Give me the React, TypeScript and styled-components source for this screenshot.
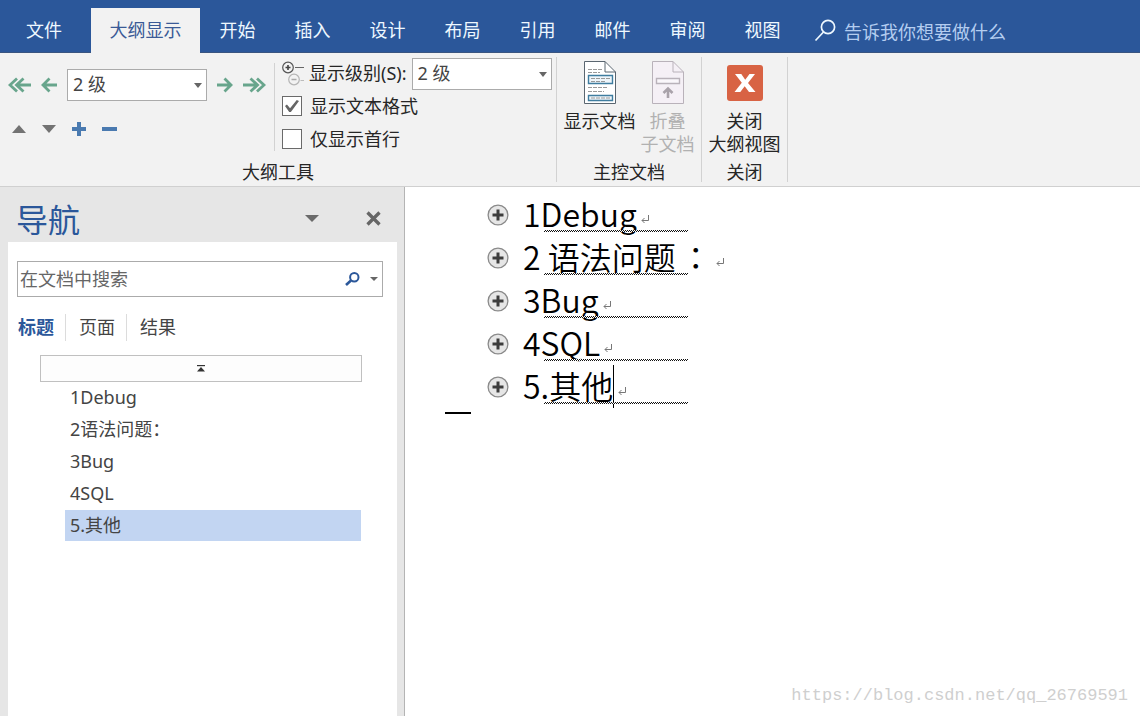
import React from "react";
import styled, { createGlobalStyle, css } from "styled-components";

const uiFont = `"Noto Sans", "Noto Sans CJK SC", sans-serif`;
const docFont = `"Noto Sans CJK SC", sans-serif`;

const Global = createGlobalStyle`
  *, *::before, *::after { box-sizing: border-box; }
  body { margin: 0; background: #fff; font: 18px/24px ${uiFont}; color: #262626; }
  button, input, select { font: inherit; color: inherit; margin: 0; }
  button { border: 0; padding: 0; background: none; cursor: pointer; }
  svg { display: block; flex: none; }
`;

const Window = styled.div`
  display: flex;
  flex-direction: column;
  min-height: 100vh;
`;

/* Tab strip */
const TabStrip = styled.nav`
  display: flex;
  height: 53px;
  padding-top: 8px;
  background: #2b579a;
  box-shadow: inset 0 -1px #3a5580;
`;
const Tab = styled.button<{ $kind?: "file" | "active" }>`
  flex: none;
  width: 75px;
  padding-bottom: 2px;
  color: #eef8ff;
  white-space: nowrap;
  ${(p) => p.$kind === "file" && css`width: 88px; margin-right: 3px;`}
  ${(p) => p.$kind === "active" && css`width: 109px; background: #f2f2f2; color: #3a5a96;`}
`;
const TellMe = styled.label`
  display: flex;
  align-items: center;
  gap: 8px;
  flex: 1;
  min-width: 0;
  padding-left: 14px;
`;
const TellMeInput = styled.input`
  flex: 1;
  min-width: 0;
  padding: 2px 0 0;
  border: 0;
  outline: 0;
  background: none;
  &::placeholder { color: #b4cdf0; opacity: 1; }
`;

/* Ribbon */
const Ribbon = styled.div`
  display: flex;
  height: 134px;
  padding: 4px 0;
  background: #f2f2f2;
  border-bottom: 1px solid #d0d0d0;
`;
const Group = styled.section<{ $width: number }>`
  display: flex;
  flex-direction: column;
  flex: none;
  width: ${(p) => p.$width}px;
  border-right: 1px solid #d2d2d2;
`;
const GroupBody = styled.div<{ $center?: boolean }>`
  display: flex;
  flex: 1;
  gap: 5px;
  justify-content: ${(p) => (p.$center ? "center" : "flex-start")};
`;
const GroupLabel = styled.h2`
  margin: 0;
  font: inherit;
  line-height: 20px;
  text-align: center;
`;
const LevelPane = styled.div`
  display: flex;
  flex-direction: column;
  gap: 16px;
  width: 275px;
  height: 88px;
  margin-top: 6px;
  padding: 6px 0 0 8px;
  border-right: 1px solid #d2d2d2;
`;
const LevelRow = styled.div`
  display: flex;
  align-items: center;
  gap: 10px;
`;
const MoveRow = styled.div`
  display: flex;
  margin-left: -4px;
`;
const MoveButton = styled.button`
  display: grid;
  place-items: center;
  width: 30px;
  height: 24px;
`;
const SelectBox = styled.div`
  display: grid;
  align-items: center;
  width: 140px;
  height: 32px;
  border: 1px solid #ababab;
  background: #fff;
  > * { grid-area: 1 / 1; }
  > svg { justify-self: end; margin-right: 4px; pointer-events: none; }
`;
const Select = styled.select`
  appearance: none;
  width: 100%;
  height: 30px;
  padding: 0 5px 2px;
  border: 0;
  outline: 0;
  background: transparent;
  color: #444;
`;
const ShowPane = styled.div`
  display: flex;
  flex-direction: column;
  gap: 1px;
  padding: 1px 0 0 2px;
`;
const ShowRow = styled.div`
  display: flex;
  align-items: center;
  gap: 5px;
  height: 32px;
  white-space: nowrap;
  > label { padding-bottom: 2px; }
`;
const CheckRow = styled.label`
  display: flex;
  align-items: center;
  gap: 8px;
  height: 32px;
  padding-bottom: 2px;
`;
const Check = styled.input`
  appearance: none;
  display: grid;
  place-items: center;
  width: 20px;
  height: 20px;
  border: 1px solid #6a6a6a;
  background: #fff;
  &:checked::before {
    content: "";
    width: 14px;
    height: 12px;
    background: #666;
    clip-path: polygon(0 50%, 14% 38%, 36% 68%, 84% 0, 100% 8%, 42% 100%, 30% 100%);
  }
`;
const BigButton = styled.button`
  display: flex;
  flex-direction: column;
  align-items: center;
  padding-top: 4px;
  line-height: 23px;
  white-space: nowrap;
  > svg { margin-bottom: 6px; }
  &:disabled { color: #b1b1b1; cursor: default; }
`;

/* Body */
const Workspace = styled.div`
  display: flex;
  flex: 1;
`;
const NavPane = styled.aside`
  display: flex;
  flex-direction: column;
  flex: none;
  width: 405px;
  padding: 0 7px 0 8px;
  background: #e6e6e6;
  border-right: 1px solid #b4b4b4;
`;
const NavHeader = styled.header`
  display: flex;
  align-items: center;
  gap: 47px;
  height: 55px;
  padding: 7px 16px 0 8px;
`;
const NavTitle = styled.h1`
  flex: 1;
  margin: 0;
  font: 32px/40px ${docFont};
  color: #2b579a;
`;
const NavBody = styled.div`
  flex: 1;
  padding: 19px 14px 0 9px;
  background: #fff;
`;
const SearchBox = styled.div`
  display: flex;
  align-items: center;
  gap: 10px;
  height: 36px;
  padding: 0 4px 0 2px;
  border: 1px solid #ababab;
`;
const SearchInput = styled.input`
  flex: 1;
  min-width: 0;
  padding: 0;
  border: 0;
  outline: 0;
  background: none;
  &::placeholder { color: #666; opacity: 1; }
`;
const NavTabs = styled.div`
  display: flex;
  margin: 17px 0 14px;
`;
const NavTab = styled.button<{ $active?: boolean }>`
  height: 27px;
  padding: 0 11px 2px 13px;
  border-right: 1px solid #dcdcdc;
  color: ${(p) => (p.$active ? "#2b579a" : "#444")};
  font-weight: ${(p) => (p.$active ? 700 : 400)};
  &:first-child { padding-left: 1px; }
  &:last-child { border-right: 0; }
`;
const JumpTop = styled.button`
  display: grid;
  place-items: center;
  width: 322px;
  height: 27px;
  margin-left: 23px;
  border: 1px solid #c0c0c0;
  background: #fdfdfd;
`;
const Headings = styled.ul`
  list-style: none;
  margin: 0 22px 0 48px;
  padding: 0;
`;
const Heading = styled.li<{ $active?: boolean }>`
  height: 32px;
  padding: 0 5px;
  border-bottom: 1px solid #fff;
  line-height: 31px;
  color: #444;
  background: ${(p) => (p.$active ? "#c2d5f2" : "transparent")};
`;

const Page = styled.main`
  display: flex;
  flex-direction: column;
  flex: 1;
  min-width: 0;
  padding: 6px 12px 8px 40px;
  background: #fff;
`;
const Outline = styled.ol`
  list-style: none;
  margin: 0;
  padding: 0 0 0 42px;
`;
const OutlineLine = styled.li`
  position: relative;
  display: flex;
  align-items: center;
  height: 43px;
  font: 350 32px/40px ${docFont};
  color: #000;
  white-space: pre;
  &::after {
    content: "";
    position: absolute;
    left: 57px;
    top: 37px;
    width: 144px;
    height: 2px;
    background: repeating-conic-gradient(#111 0 25%, #fff 0 50%) 0 0 / 2px 2px;
  }
`;
const LineText = styled.span`
  padding-bottom: 4px;
`;
const Expander = styled.button`
  margin-right: 14px;
`;
const WideColon = styled.span`
  padding-left: 4px;
  font-family: "Noto Sans CJK TC", sans-serif;
`;
const Caret = styled.span`
  width: 1px;
  height: 43px;
  background: #000;
`;
const Mark = styled.svg`
  margin: 10px 0 0 4px;
`;
const EndMark = styled.hr`
  width: 26px;
  height: 2px;
  margin: 4px 0 0;
  border: 0;
  background: #000;
`;
const Watermark = styled.footer`
  margin-top: auto;
  align-self: flex-end;
  font: 17px/24px "Liberation Mono", monospace;
  color: #cfcfcf;
`;

const DownArrow = ({ w = 8, h = 5, color = "#666" }: { w?: number; h?: number; color?: string }) => (
  <svg width={w} height={h} viewBox="0 0 8 5" preserveAspectRatio="none"><path d="M0 0H8L4 5Z" fill={color} /></svg>
);

const ArrowIcon = ({ double, right }: { double?: boolean; right?: boolean }) => {
  const w = double ? 23 : 16;
  return (
    <svg width={w} height="16" viewBox={`0 0 ${w} 16`} fill="none" stroke="#68a58c" strokeWidth="2.8">
      <g transform={right ? `matrix(-1 0 0 1 ${w} 0)` : undefined}>
        {double ? <path d="M9 1.5L2 8L9 14.5M15.5 1.5L8.500 8L15.500 14.500M9 8H23" /> : <path d="M8.500 1.500L2 8L8.500 14.500M2 8H16" />}
      </g>
    </svg>
  );
};

const ReturnMark = () => (
  <Mark width="9" height="9" viewBox="0 0 9 9" fill="none" stroke="#777" aria-hidden="true">
    <path d="M7.500 0V5.500H1M3.500 3L1 5.500L3.500 8" />
  </Mark>
);

const OutlinePlus = () => (
  <Expander aria-label="展开">
    <svg width="22" height="22" viewBox="0 0 22 22">
      <circle cx="11" cy="11" r="9.900" fill="#e6e6e6" stroke="#8a8a8a" strokeWidth="1.300" />
      <path d="M11 5.500V16.500M5.500 11H16.500" stroke="#3c3c3c" strokeWidth="3" />
    </svg>
  </Expander>
);

const tabs = ["开始", "插入", "设计", "布局", "引用", "邮件", "审阅", "视图"];
const headings = ["1Debug", "2语法问题：", "3Bug", "4SQL", "5.其他"];

export default function App() {
  return (
    <>
      <Global />
      <Window>
        <TabStrip>
          <Tab $kind="file">文件</Tab>
          <Tab $kind="active">大纲显示</Tab>
          {tabs.map((t) => <Tab key={t}>{t}</Tab>)}
          <TellMe>
            <svg width="22" height="24" viewBox="0 0 22 24" fill="none" stroke="#eef8ff" strokeWidth="1.700">
              <circle cx="14" cy="8" r="6.600" />
              <path d="M9.500 13L1.500 21.500" />
            </svg>
            <TellMeInput aria-label="告诉我你想要做什么" placeholder="告诉我你想要做什么" />
          </TellMe>
        </TabStrip>

        <Ribbon>
          <Group $width={557}>
            <GroupBody>
              <LevelPane>
                <LevelRow>
                  <button aria-label="提升至标题 1"><ArrowIcon double /></button>
                  <button aria-label="升级"><ArrowIcon /></button>
                  <SelectBox>
                    <Select aria-label="大纲级别" defaultValue="2"><option value="2">2 级</option></Select>
                    <DownArrow />
                  </SelectBox>
                  <button aria-label="降级"><ArrowIcon right /></button>
                  <button aria-label="降级为正文"><ArrowIcon double right /></button>
                </LevelRow>
                <MoveRow>
                  <MoveButton aria-label="上移"><svg width="14" height="8" viewBox="0 0 14 8"><path d="M0 8H14L7 0Z" fill="#737373" /></svg></MoveButton>
                  <MoveButton aria-label="下移"><svg width="14" height="8" viewBox="0 0 14 8"><path d="M0 0H14L7 8Z" fill="#737373" /></svg></MoveButton>
                  <MoveButton aria-label="展开"><svg width="14" height="14" viewBox="0 0 14 14"><path d="M7 0V14M0 7H14" stroke="#4a7ab0" strokeWidth="4" /></svg></MoveButton>
                  <MoveButton aria-label="折叠"><svg width="15" height="4" viewBox="0 0 15 4"><path d="M0 2H15" stroke="#4a7ab0" strokeWidth="4" /></svg></MoveButton>
                </MoveRow>
              </LevelPane>
              <ShowPane>
                <ShowRow>
                  <svg width="22" height="26" viewBox="0 0 22 26" fill="none">
                    <circle cx="6" cy="6.500" r="5.300" stroke="#555" strokeWidth="1.200" />
                    <path d="M6 4V9M3.500 6.500H8.500" stroke="#444" strokeWidth="1.600" />
                    <path d="M13 6.500H22" stroke="#666" />
                    <circle cx="12" cy="18.500" r="5.300" stroke="#b5b5b5" strokeWidth="1.200" />
                    <path d="M9.500 18.500H14.500" stroke="#aaa" strokeWidth="1.500" />
                    <path d="M18.500 19.500H22" stroke="#bbb" />
                  </svg>
                  <label htmlFor="show-level">显示级别(S):</label>
                  <SelectBox>
                    <Select id="show-level" defaultValue="2"><option value="2">2 级</option></Select>
                    <DownArrow />
                  </SelectBox>
                </ShowRow>
                <CheckRow><Check type="checkbox" defaultChecked />显示文本格式</CheckRow>
                <CheckRow><Check type="checkbox" />仅显示首行</CheckRow>
              </ShowPane>
            </GroupBody>
            <GroupLabel>大纲工具</GroupLabel>
          </Group>

          <Group $width={145}>
            <GroupBody $center>
              <BigButton>
                <svg width="32" height="43" viewBox="0 0 32 43" fill="none">
                  <path d="M.5.5H21L31.500 11V42.500H.5Z" fill="#fff" stroke="#5a6670" />
                  <path d="M21 .5V11H31.500" stroke="#5a6670" />
                  <path d="M4 8.500H18M4 11.500H16M4 26.500H24M4 30.500H20" stroke="#999" strokeDasharray="4 1" />
                  <path d="M4.500 14.500H28.500V22.500H4.500ZM4.500 34.500H28.500V39.500H4.500Z" fill="#eef5fa" stroke="#3f7d9f" strokeWidth="1.400" />
                  <path d="M7 17.500H26M7 20.500H22M7 37H26" stroke="#999" strokeDasharray="4 1" />
                </svg>
                显示文档
              </BigButton>
              <BigButton disabled>
                <svg width="32" height="43" viewBox="0 0 32 43" fill="none" stroke="#b9b2ba">
                  <path d="M.5.5H21L31.500 11V42.500H.5Z" fill="#f5f0f6" />
                  <path d="M21 .5V11H31.500" />
                  <path d="M4.500 17.500H27.500V22.500H4.500Z" fill="#faf7fb" strokeWidth="1.400" />
                  <path d="M16 37V28M11.500 32L16 27.500L20.500 32" stroke="#a9a2aa" strokeWidth="2.600" />
                </svg>
                折叠<br />子文档
              </BigButton>
            </GroupBody>
            <GroupLabel>主控文档</GroupLabel>
          </Group>

          <Group $width={86}>
            <GroupBody $center>
              <BigButton>
                <svg width="36" height="43" viewBox="0 0 36 43">
                  <rect y="4" width="36" height="36" rx="3" fill="#d86344" />
                  <path d="M8 13H14.300L18.200 18.800L22.500 13H28L21 22L28.500 31H22L17.700 25.200L13.300 31H7.500L14.800 21.800Z" fill="#fff" />
                </svg>
                关闭<br />大纲视图
              </BigButton>
            </GroupBody>
            <GroupLabel>关闭</GroupLabel>
          </Group>
        </Ribbon>

        <Workspace>
          <NavPane>
            <NavHeader>
              <NavTitle>导航</NavTitle>
              <button aria-label="任务窗格选项"><DownArrow w={14} h={7} color="#6a6a6a" /></button>
              <button aria-label="关闭">
                <svg width="15" height="15" viewBox="0 0 15 15"><path d="M1.500 1.500L13.500 13.500M13.500 1.500L1.500 13.500" stroke="#666" strokeWidth="3.300" /></svg>
              </button>
            </NavHeader>
            <NavBody>
              <SearchBox>
                <SearchInput aria-label="在文档中搜索" placeholder="在文档中搜索" />
                <button aria-label="搜索">
                  <svg width="15" height="14" viewBox="0 0 15 14" fill="none" stroke="#2b579a"><circle cx="9.300" cy="5.300" r="4.200" strokeWidth="2" /><path d="M6 8.500L1 13" strokeWidth="2.600" /></svg>
                </button>
                <button aria-label="搜索选项"><DownArrow w={8} h={4} /></button>
              </SearchBox>
              <NavTabs>
                <NavTab $active>标题</NavTab>
                <NavTab>页面</NavTab>
                <NavTab>结果</NavTab>
              </NavTabs>
              <JumpTop aria-label="跳转到顶部">
                <svg width="8" height="7" viewBox="0 0 8 7"><path d="M0 .6H8" stroke="#333" strokeWidth="1.200" /><path d="M4 2L8 6.500H0Z" fill="#333" /></svg>
              </JumpTop>
              <Headings>
                {headings.map((h, i) => <Heading key={h} $active={i === 4}>{h}</Heading>)}
              </Headings>
            </NavBody>
          </NavPane>

          <Page>
            <Outline>
              <OutlineLine><OutlinePlus /><LineText>1Debug</LineText><ReturnMark /></OutlineLine>
              <OutlineLine><OutlinePlus /><LineText>2 语法问题<WideColon>：</WideColon></LineText><ReturnMark /></OutlineLine>
              <OutlineLine><OutlinePlus /><LineText>3Bug</LineText><ReturnMark /></OutlineLine>
              <OutlineLine><OutlinePlus /><LineText>4SQL</LineText><ReturnMark /></OutlineLine>
              <OutlineLine><OutlinePlus /><LineText>5.其他</LineText><Caret /><ReturnMark /></OutlineLine>
            </Outline>
            <EndMark />
            <Watermark>https://blog.csdn.net/qq_26769591</Watermark>
          </Page>
        </Workspace>
      </Window>
    </>
  );
}
